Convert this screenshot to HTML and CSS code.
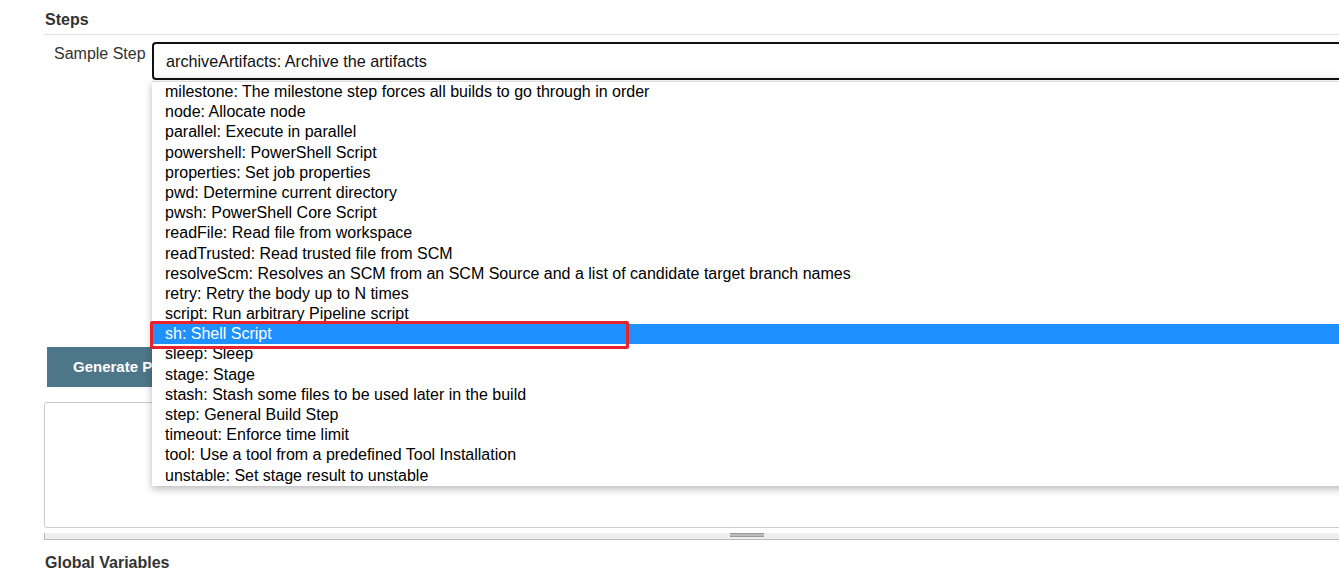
FILE: index.html
```html
<!DOCTYPE html>
<html>
<head>
<meta charset="utf-8">
<link rel="stylesheet" href="styles.css">
</head>
<body>
<div class="page">
  <h2 class="section-title">Steps</h2>
  <div class="step-row">
    <label class="step-label">Sample Step</label>
    <div class="select-wrap">
      <div class="select-box">archiveArtifacts: Archive the artifacts</div>
      <ul class="dropdown">
        <li>milestone: The milestone step forces all builds to go through in order</li>
        <li>node: Allocate node</li>
        <li>parallel: Execute in parallel</li>
        <li>powershell: PowerShell Script</li>
        <li>properties: Set job properties</li>
        <li>pwd: Determine current directory</li>
        <li>pwsh: PowerShell Core Script</li>
        <li>readFile: Read file from workspace</li>
        <li>readTrusted: Read trusted file from SCM</li>
        <li>resolveScm: Resolves an SCM from an SCM Source and a list of candidate target branch names</li>
        <li>retry: Retry the body up to N times</li>
        <li>script: Run arbitrary Pipeline script</li>
        <li class="selected">sh: Shell Script</li>
        <li>sleep: Sleep</li>
        <li>stage: Stage</li>
        <li>stash: Stash some files to be used later in the build</li>
        <li>step: General Build Step</li>
        <li>timeout: Enforce time limit</li>
        <li>tool: Use a tool from a predefined Tool Installation</li>
        <li>unstable: Set stage result to unstable</li>
      </ul>
      <div class="highlight-box"></div>
    </div>
  </div>
  <div class="actions">
    <button class="btn-generate">Generate Pipeline Script</button>
  </div>
  <div class="output-box"></div>
  <div class="resizer"><span class="grip"></span></div>
  <h2 class="section-title global">Global Variables</h2>
</div>
</body>
</html>
```
FILE: styles.css
```css
html, body {
  margin: 0;
  padding: 0;
  overflow: hidden;
  background: #fff;
  font-family: "Liberation Sans", Arial, sans-serif;
  color: #333;
}
.page {
  padding-left: 44px;
  width: 1340px;
}
.section-title {
  margin: 0;
  font-size: 16px;
  font-weight: bold;
  color: #333;
  padding: 11px 0 5px 1px;
  line-height: 18px;
  border-bottom: 1px solid #e2e2e2;
}
.section-title.global {
  border-bottom: none;
  padding-top: 14px;
}
.step-row {
  display: flex;
  margin-top: 7px;
  height: 305px;
}
.step-label {
  width: 98px;
  padding-left: 10px;
  padding-top: 2px;
  font-size: 16px;
  line-height: 20px;
  color: #333;
}
.select-wrap {
  position: relative;
  flex: 1;
}
.select-box {
  height: 34px;
  border: 2px solid #111;
  border-radius: 4px;
  box-sizing: content-box;
  padding-left: 12px;
  font-size: 16.2px;
  line-height: 34px;
  color: #111;
  background: linear-gradient(#fff 70%, #f6f6f6);
}
.dropdown {
  position: absolute;
  top: 39px;
  left: 0;
  right: 0;
  margin: 0;
  padding: 0;
  list-style: none;
  background: #fff;
  border-top: 1px solid #ddd;
  box-shadow: 0 3px 8px rgba(0,0,0,0.28);
  z-index: 2;
}
.dropdown li {
  height: 20.2px;
  line-height: 20px;
  padding-left: 13px;
  font-size: 16px;
  color: #000;
  white-space: nowrap;
}
.dropdown li.selected {
  background: #1e90ff;
  color: #fff;
}
.highlight-box {
  position: absolute;
  left: -2px;
  top: 279px;
  width: 473px;
  height: 22px;
  border: 3px solid #e8232c;
  border-radius: 2px;
  z-index: 3;
}
.actions {
  padding-left: 3px;
}
.btn-generate {
  height: 40px;
  padding: 0 26px 2px;
  border: none;
  background: #4e7689;
  color: #fff;
  font-family: "Liberation Sans", Arial, sans-serif;
  font-size: 15px;
  font-weight: bold;
}
.output-box {
  margin-top: 15px;
  height: 124px;
  border: 1px solid #ccc;
  border-radius: 3px;
}
.resizer {
  margin-top: 5px;
  height: 6px;
  background: #eee;
  border-left: 1px solid #bbb;
  border-bottom: 1px solid #bbb;
}
.grip {
  display: block;
  width: 34px;
  height: 2px;
  margin-left: 685px;
  margin-top: 1px;
  border-top: 1px solid #999;
  border-bottom: 1px solid #999;
  background: #bbb;
}
```
